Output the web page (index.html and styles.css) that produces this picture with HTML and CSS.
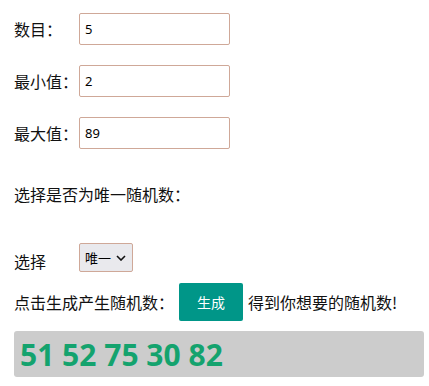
FILE: index.html
```html
<!DOCTYPE html>
<html lang="zh">
<head>
<meta charset="utf-8">
<link rel="stylesheet" href="styles.css">
</head>
<body>
<div class="page">
  <div class="row field"><span class="label">数目：</span><input class="num" type="text" value="5"></div>
  <div class="row field"><span class="label">最小值：</span><input class="num" type="text" value="2"></div>
  <div class="row field"><span class="label">最大值：</span><input class="num" type="text" value="89"></div>
  <p class="question">选择是否为唯一随机数：</p>
  <div class="row choose"><span class="label">选择</span>
    <div class="selwrap">
      <select class="sel"><option>唯一</option><option>不唯一</option></select>
      <svg class="chev" width="10" height="6" viewBox="0 0 10 6"><path d="M1 1 L5 5 L9 1" fill="none" stroke="#111" stroke-width="1.6"/></svg>
    </div>
  </div>
  <div class="row gen"><span>点击生成产生随机数：</span><button class="btn">生成</button><span>得到你想要的随机数!</span></div>
  <div class="result">51 52 75 30 82</div>
</div>
</body>
</html>
```
FILE: styles.css
```css
html, body { margin: 0; padding: 0; background: #fff; }
body { font-family: "Microsoft YaHei", "Noto Sans CJK SC", "Noto Sans", sans-serif; font-size: 16px; color: #111; }
.page { padding: 13px 5px 0 14px; }
.row { display: flex; align-items: center; }
.field { height: 32px; margin-bottom: 20px; }
.label { width: 65px; flex: none; white-space: nowrap; }
.num { box-sizing: border-box; width: 151px; height: 32px; border: 1px solid #cfa898; border-radius: 2px; padding: 0 5px; font-family: "Noto Sans", sans-serif; font-size: 13px; color: #000; outline: none; }
.question { margin: 33px 0 0; line-height: 24px; }
.choose { margin-top: 37px; height: 29px; }
.choose .label { padding-top: 6px; }
.selwrap { position: relative; width: 54px; height: 29px; }
.sel { -webkit-appearance: none; appearance: none; box-sizing: border-box; width: 54px; height: 29px; border: 1px solid #cfa898; border-radius: 2px; background: #e9e9ed; font-family: "Noto Sans CJK SC", sans-serif; font-size: 13px; color: #000; padding: 0 0 0 5px; margin: 0; }
.chev { position: absolute; right: 7px; top: 12px; pointer-events: none; }
.gen { margin-top: 11px; height: 38px; }
.btn { margin: 0 5px; width: 64px; height: 38px; border: none; border-radius: 2px; background: #009688; color: #fff; font-family: "Noto Sans CJK SC", sans-serif; font-size: 14px; }
.result { margin-top: 10px; width: 410px; height: 46px; box-sizing: border-box; background: #cccccc; border-radius: 3px; padding-left: 6px; display: flex; align-items: center; color: #14a36e; font-family: "Noto Sans", sans-serif; font-weight: 700; font-size: 30px; }
```
